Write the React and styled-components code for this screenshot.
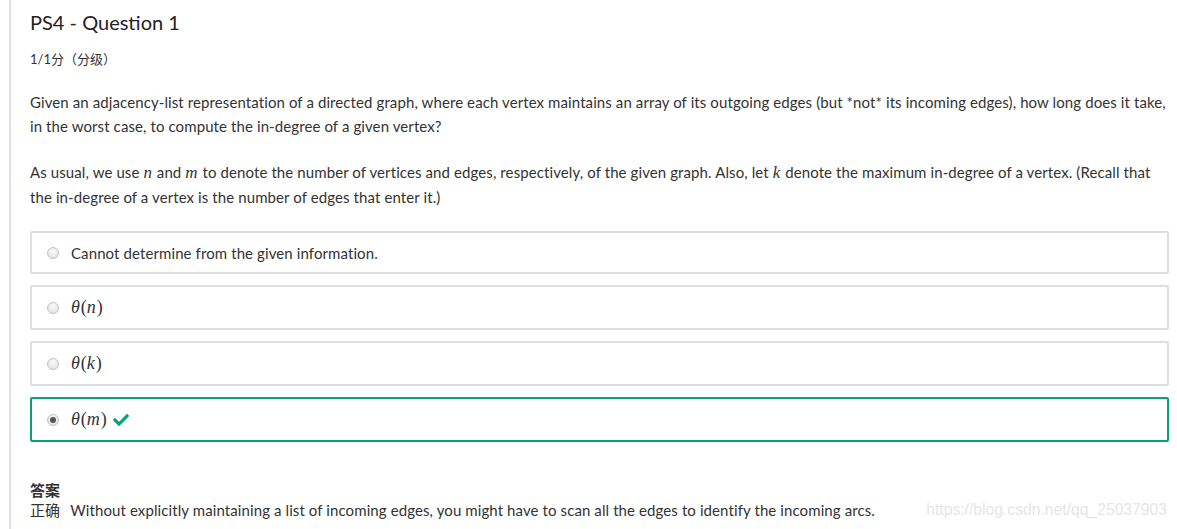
import styled, { createGlobalStyle } from "styled-components";
import { FaCheck } from "react-icons/fa";

const GlobalStyle = createGlobalStyle`
  body {
    margin: 0;
    background: #fff;
    font-family: Lato, "Noto Sans CJK SC", sans-serif;
    color: #333;
  }
`;

const Page = styled.div`
  margin-left: 9px;
  border-left: 2px solid #e0e0e0;
  padding: 8px 8px 0 19px;
  min-height: 529px;
  box-sizing: border-box;
  position: relative;
`;

const Title = styled.h2`
  margin: 0;
  font-size: 20px;
  font-weight: 400;
  line-height: 28px;
  color: #222;
`;

const Score = styled.div`
  margin-top: 14px;
  font-size: 13px;
  line-height: 18px;
  color: #333;
`;

const Prompt = styled.div`
  margin-top: 22px;
  font-size: 15px;
  line-height: 24px;
  letter-spacing: 0.1px;
`;

const Para = styled.p`
  margin: 0 0 22px;
`;

const Math = styled.span`
  font-family: "Liberation Serif", "DejaVu Serif", serif;
  font-size: ${(p) => p.size || 17}px;
  letter-spacing: 0;
`;

const MathVar = styled.i`
  font-style: italic;
  padding-right: 1px;
`;

const Options = styled.div`
  display: flex;
  flex-direction: column;
  gap: 11px;
  margin-top: 11px;
`;

const Option = styled.div`
  display: flex;
  align-items: center;
  gap: 12px;
  height: ${(p) => (p.first ? 39 : 41)}px;
  padding: 0 16px 0 15px;
  border: 2px solid ${(p) => (p.correct ? "#09a17a" : "#dedede")};
  border-radius: 2px;
  font-size: 15px;
  letter-spacing: 0.1px;
`;

const Radio = styled.span`
  width: 12px;
  height: 12px;
  border-radius: 50%;
  box-sizing: border-box;
  border: 1px solid #c4c4c4;
  background: radial-gradient(circle at 50% 35%, #fafafa, #dcdcdc);
  display: flex;
  align-items: center;
  justify-content: center;
  &::after {
    content: "";
    width: 6px;
    height: 6px;
    border-radius: 50%;
    background: #555;
    display: ${(p) => (p.checked ? "block" : "none")};
  }
`;

const Check = styled(FaCheck)`
  color: #09a17a;
  font-size: 16px;
  margin-left: -6px;
`;

const Answer = styled.div`
  margin-top: 38px;
  font-size: 15px;
  line-height: 20px;
  letter-spacing: 0.1px;
`;

const AnswerHead = styled.div`
  font-weight: 700;
`;

const Verdict = styled.span`
  margin-right: 10px;
`;

const Watermark = styled.span`
  position: absolute;
  right: 10px;
  bottom: 10px;
  font-family: "Liberation Sans", Arial, sans-serif;
  font-size: 15.7px;
  color: #e6e6e6;
`;

const options = [
  { label: "Cannot determine from the given information.", text: true },
  { label: "n" },
  { label: "k" },
  { label: "m", correct: true },
];

export default function App() {
  return (
    <>
      <GlobalStyle />
      <Page>
        <Title>PS4 - Question 1</Title>
        <Score>1/1分（分级）</Score>
        <Prompt>
          <Para>
            Given an adjacency-list representation of a directed graph, where each vertex maintains an array of its outgoing edges (but *not* its incoming edges), how long does it take,
            <br />
            in the worst case, to compute the in-degree of a given vertex?
          </Para>
          <Para>
            As usual, we use <Math><MathVar>n</MathVar></Math> and <Math><MathVar>m</MathVar></Math> to denote the number of vertices and edges, respectively, of the given graph. Also, let <Math><MathVar>k</MathVar></Math> denote the maximum in-degree of a vertex. (Recall that
            <br />
            the in-degree of a vertex is the number of edges that enter it.)
          </Para>
        </Prompt>
        <Options>
          {options.map((o, i) => (
            <Option key={i} first={i === 0} correct={o.correct}>
              <Radio checked={o.correct} />
              {o.text ? (
                <span>{o.label}</span>
              ) : (
                <Math size={18}>
                  <MathVar>θ</MathVar>(<MathVar>{o.label}</MathVar>)
                </Math>
              )}
              {o.correct && <Check />}
            </Option>
          ))}
        </Options>
        <Answer>
          <AnswerHead>答案</AnswerHead>
          <div>
            <Verdict>正确</Verdict>
            Without explicitly maintaining a list of incoming edges, you might have to scan all the edges to identify the incoming arcs.
          </div>
        </Answer>
        <Watermark>https://blog.csdn.net/qq_25037903</Watermark>
      </Page>
    </>
  );
}
